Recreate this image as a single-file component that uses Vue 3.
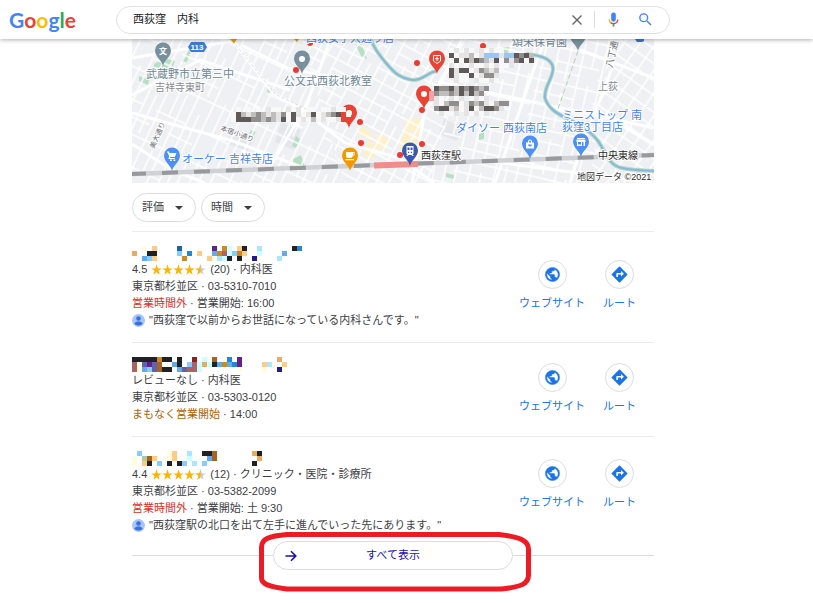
<template>
  <div class="page">
    <header class="top">
      <a class="logo" href="#" aria-label="Google">
        <span class="b">G</span><span class="r">o</span><span class="y">o</span><span class="b">g</span><span class="g">l</span><span class="r">e</span>
      </a>
      <form class="search" role="search" @submit.prevent>
        <input v-model="query" type="text" aria-label="検索">
        <button type="button" class="icon-btn clear" aria-label="クリア" @click="query = ''">
          <svg viewBox="0 0 16 16" width="16" height="16"><path d="M3.5 3.5l9 9M12.5 3.5l-9 9" stroke="#5f6368" stroke-width="1.4" fill="none" /></svg>
        </button>
        <span class="sep" />
        <button type="button" class="icon-btn mic" aria-label="音声検索">
          <svg viewBox="0 0 24 24" width="17" height="17">
            <path fill="#4285f4" d="M12 15a3.3 3.3 0 0 0 3.3-3.3V5.3a3.3 3.3 0 0 0-6.6 0v6.4A3.3 3.3 0 0 0 12 15z" />
            <path fill="#34a853" d="M10.8 18.5h2.4V22h-2.4z" />
            <path fill="#fbbc04" d="M7 16.9A6.8 6.8 0 0 1 5 12h2.1a4.8 4.8 0 0 0 1.4 3.4z" />
            <path fill="#ea4335" d="M12 17a5 5 0 0 1-3.5-1.6L7 16.9A7 7 0 0 0 12 19a7 7 0 0 0 7-7h-2.1A4.9 4.9 0 0 1 12 17z" />
          </svg>
        </button>
        <button type="submit" class="icon-btn go" aria-label="検索する">
          <svg viewBox="0 0 24 24" width="17" height="17"><path fill="#4285f4" d="M15.5 14h-.79l-.28-.27A6.47 6.47 0 0 0 16 9.5 6.5 6.5 0 1 0 9.5 16c1.61 0 3.09-.59 4.23-1.57l.27.28v.79l5 4.99L20.49 19zm-6 0a4.5 4.5 0 1 1 0-9 4.5 4.5 0 0 1 0 9z" /></svg>
        </button>
      </form>
    </header>

    <main class="results">
      <svg class="map" viewBox="132 39 522 144" role="img" aria-label="地図">
        <defs>
          <pattern id="west" width="47" height="62" patternUnits="userSpaceOnUse" patternTransform="rotate(25)">
            <path d="M3 0V62M14 0V34M22 0V62M33 0V62M41 20V62M0 4H47M0 34H33M22 50H47" class="street" />
          </pattern>
          <pattern id="mid" width="52" height="44" patternUnits="userSpaceOnUse" patternTransform="rotate(28)">
            <path d="M2 0V44M13 0V44M25 0V26M36 0V44M45 14V44M0 3H52M0 14H36M0 26H52M13 36H52" class="street" />
          </pattern>
          <pattern id="east" width="60" height="48" patternUnits="userSpaceOnUse" patternTransform="rotate(13)">
            <path d="M3 0V48M16 0V48M28 12V48M41 0V48M52 0V30M0 4H60M0 16H41M16 30H60M0 40H41" class="street" />
          </pattern>
          <pattern id="corner" width="40" height="26" patternUnits="userSpaceOnUse" patternTransform="rotate(35)">
            <path d="M2 0V26M16 0V26M29 0V26M0 3H40M0 15H40" class="street" />
          </pattern>
          <path id="pin" d="M0 15C-1 9-8 6-8-.5a8 8 0 0 1 16 0C8 6 1 9 0 15z" />
        </defs>

        <rect x="132" y="39" width="522" height="144" fill="#eff0f3" />
        <path fill="#e4e6ec" d="M234 128l22 8-9 15-21-8zM281 122l20 8-7 20-19-8zM444 119l19 8-6 14-18-7z" />
        <path fill="#b7dfc3" d="M154 64l10-6 11 3-3 8-18-2zM188 50l4-3-5 15-6-1zM139 76l10 4-1 5-9-4zM268 87l6 2-2 5-5-2zM293 159l8-4 4 12-11 3zM353 39l7 1 7 19-6-3zM296 136l4 3-4 9-4-2zM251 130l5 2-3 4-4-2zM500 48l10-1v6l-9 1zM479 134l5-2v7l-5 1zM446 173l8 2v4l-8-2z" />
        <path fill="#fdf0ca" d="M404 121l6-4 3 12-6 7zM411 119l10-1-2 15-9-2zM404 128l8 6-5 17-7-3zM359 126l13 6-2 8-12-5zM368 140l11 6-6 14-10-5zM377 134l13 5-4 12-10-4zM415 128l6 2-3 15-6-2z" />

        <path d="M132 39H300L345 183H132z" fill="url(#west)" />
        <path d="M300 39H470L430 183H345z" fill="url(#mid)" />
        <path d="M470 39H610L590 183H430z" fill="url(#east)" />
        <path d="M610 39H654V183H590z" fill="url(#corner)" />

        <g class="road">
          <path d="M132 58L232 41M243 46L290 69 332 77M132 113L236 142 304 168M132 144L172 170 205 183" />
          <path d="M233 41L273 93 300 108 345 143 400 158 434 183M462 39L447 69 425 110 412 183" />
          <path d="M330 39L316 80 304 110 268 170M545 39L530 80 495 183M615 60L600 100 583 140 570 183M440 82L654 128" />
          <path d="M132 95L200 60 290 90M480 160L654 183M580 50L654 78M555 110L600 112 654 145" />
        </g>
        <path d="M236 45L275 94 312 112" class="dashed" />
        <path d="M578 51L557 112" stroke="#a5d7b3" stroke-width="1" stroke-dasharray="5 3" />

        <path :d="river" stroke="#b4dcc0" stroke-width="4" />
        <path :d="river" stroke="#8ab6df" stroke-width="2" />

        <path d="M132 174L654 155" stroke="#cfd1d4" stroke-width="4.5" />
        <path d="M132 174L654 155" stroke="#97999c" stroke-width="4" stroke-dasharray="16 16" stroke-dashoffset="2" />
        <path d="M374 165.5L418 164" stroke="#f08d88" stroke-width="6" />

        <g fill="#ea3c33">
          <circle v-for="d in dots" :key="d.join()" :cx="d[0]" :cy="d[1]" r="3" />
        </g>

        <g v-for="p in pins" :key="p.kind + p.x" :transform="`translate(${p.x} ${p.y})`">
          <use href="#pin" :fill="p.color" />
          <circle v-if="p.kind === 'dot'" r="3" fill="#fff" />
          <text v-else-if="p.kind === 'school'" class="pin-char" y="3">文</text>
          <path v-else-if="p.kind === 'clinic'" d="M-3.5-3.5h7v5.5L0 4.5-3.5 2zM0-2.5v4.5M-2-.3h4" fill="none" stroke="#fff" stroke-width="1" />
          <path v-else-if="p.kind === 'cafe'" fill-rule="evenodd" d="M-4-4h8.500v3.500H3A3 3 0 0 1 .5 2h-2A2.500 2.500 0 0 1-4-.5zM3-3v1.500h.8V-3zM-4.500 3h8.500v1.200h-8.500z" fill="#fff" />
          <path v-else-if="p.kind === 'train'" fill-rule="evenodd" d="M-3.5-5h7V2.500L2.500 3.500 4 5H2.500L1.500 4h-3L-2.500 5H-4l1.500-1.500-1-1zM-2.500-3.500v2.500h2v-2.500zM.5-3.500v2.500h2v-2.500zM-2 .8V2h1.200V.8zM.8.8V2H2V.8z" fill="#fff" />
          <path v-else-if="p.kind === 'cart'" d="M-5-4.500h2l.6 1.500h6.800L2.800 1h-4.500l-.5 1h5v1h-6.500l1-2.500-1.800-4h-.5zM-2 3.500h1.800V5H-2zM1.500 3.500h1.800V5H1.500z" fill="#fff" />
          <path v-else-if="p.kind === 'bag'" fill-rule="evenodd" d="M-4-1.500h2v-1a2 2 0 0 1 4 0v1h2v6h-8zM-1-1.500h2v-1a1 1 0 0 0-2 0zM-2 .5a2 2 0 0 0 4 0z" fill="#fff" />
          <path v-else fill-rule="evenodd" d="M-4-4h8v1h-8zM-4.500-2.500h9V0H4v4H2.500V0H1v4h-5V0h-.5zM-3 0v2.500h3V0z" fill="#fff" />
        </g>
        <path d="M230 39h7l-3 4.500zM294 39h5l-2 3z" fill="#f29900" />
        <path d="M635 39h9v2l-2 1h-5z" fill="#3f6fd0" />
        <path d="M191 42h13l3 5-3 5h-13l-3-5z" fill="#3d7bd0" />
        <text x="197" y="50" class="route">113</text>

        <text
          v-for="l in labels"
          :key="l.text"
          :class="['label', l.tone]"
          :font-size="l.size"
          :transform="`translate(${l.x} ${l.y}) rotate(${l.turn || 0})`"
        >{{ l.text }}</text>

        <g v-for="m in mapMosaics" :key="m.x" shape-rendering="crispEdges">
          <rect v-for="c in cells(m.rows)" :key="c.id" :x="m.x + c.x" :y="m.y + c.y" width="5" height="5" :fill="c.fill" />
        </g>
      </svg>

      <div class="filters">
        <button v-for="f in filters" :key="f" type="button" class="chip" aria-haspopup="true">
          {{ f }}
          <svg viewBox="0 0 8 4" width="8" height="4"><path d="M0 0h8L4 4z" fill="#3c4043" /></svg>
        </button>
      </div>

      <article v-for="place in places" :key="place.phone" class="place">
        <div class="info">
          <svg class="name" viewBox="0 0 180 15" width="180" height="15" shape-rendering="crispEdges" aria-hidden="true">
            <rect v-for="c in cells(place.name)" :key="c.id" :x="c.x" :y="c.y" width="5" height="5" :fill="c.fill" />
          </svg>
          <p v-if="place.rating" class="line rating">
            <span>{{ place.rating }}</span>
            <svg class="stars" viewBox="0 0 55 11" width="55" height="11" aria-hidden="true">
              <path v-for="n in 5" :key="n" :d="star" :transform="`translate(${(n - 1) * 11} 0)`" :fill="n < 5 ? '#fbb400' : '#c7c9cc'" />
              <path d="M49.5.3V8.300L46.300 10.700 47.500 6.800 44.300 4.400H48.200z" fill="#fbb400" />
            </svg>
            <span>({{ place.count }}) · {{ place.type }}</span>
          </p>
          <p v-else class="line">レビューなし · {{ place.type }}</p>
          <p class="line">東京都杉並区 · {{ place.phone }}</p>
          <p class="line"><span :class="place.tone">{{ place.status }}</span> · {{ place.hours }}</p>
          <p v-if="place.quote" class="line quote">
            <svg viewBox="0 0 12 12" width="13" height="13" aria-hidden="true">
              <circle cx="6" cy="6" r="6" fill="#a6c5fa" />
              <circle cx="6" cy="4.2" r="2.1" fill="#3b6fdc" />
              <path d="M2.2 9.3C2.5 7.5 4.5 7 6 7s3.5.5 3.8 2.3A5 5 0 0 1 6 10.500a5 5 0 0 1-3.8-1.2z" fill="#3b6fdc" />
            </svg>
            <span>"{{ place.quote }}"</span>
          </p>
        </div>
        <nav class="actions">
          <a href="#" class="action">
            <span class="circle">
              <svg viewBox="0 0 24 24" width="17" height="17"><path fill="#1a73e8" stroke="#1a73e8" stroke-width=".7" d="M12 2a10 10 0 1 0 0 20 10 10 0 0 0 0-20zm-1 17.930A8 8 0 0 1 4.210 10.210L9 15v1a2 2 0 0 0 2 2zm6.900-2.540A2 2 0 0 0 16 16h-1v-3a1 1 0 0 0-1-1H8v-2h2a1 1 0 0 0 1-1V7h2a2 2 0 0 0 2-2v-.410a8 8 0 0 1 2.900 12.800z" /></svg>
            </span>
            ウェブサイト
          </a>
          <a href="#" class="action">
            <span class="circle">
              <svg viewBox="0 0 24 24" width="19" height="19"><path fill="#1a73e8" d="M21.710 11.290l-9-9a1 1 0 0 0-1.410 0l-9 9a1 1 0 0 0 0 1.410l9 9a1 1 0 0 0 1.410 0l9-9a1 1 0 0 0 0-1.410zM14 14.500V12h-4v3H8v-4a1 1 0 0 1 1-1h5V7.500l3.500 3.500z" /></svg>
            </span>
            ルート
          </a>
        </nav>
      </article>

      <div class="more">
        <button type="button" class="more-btn">
          <svg viewBox="0 0 12 12" width="12" height="12"><path d="M.5 6h10M6 1.200L10.800 6 6 10.800" fill="none" stroke="#1a0dab" stroke-width="1.600" /></svg>
          <span>すべて表示</span>
        </button>
        <svg class="marker" viewBox="0 0 272 62" width="272" height="62" aria-hidden="true">
          <path d="M28 4.500H240C262 7 269.500 11 269.500 19V45C269.500 54 262 57 242 59H28C10 57 2.500 54 2.500 48V17C2.500 9 10 6 28 4.500z" />
        </svg>
      </div>
    </main>
  </div>
</template>

<script setup>
import { ref } from 'vue'

const query = ref('西荻窪　内科')
const filters = ['評価', '時間']

const star = 'M5.5.3L6.8 4.4H10.7L7.5 6.8 8.7 10.7 5.5 8.3 2.3 10.7 3.5 6.8.3 4.4H4.2z'
const river = 'M370 38C374 48 379 55 386 63S398 78 413 80C424 80 426 73 436 71M526 54C540 55 552 58 553 68C553 80 544 85 545 98C548 108 556 113 566 118S590 130 598 141S608 165 622 168S645 170 654 171'

// one character per mosaic tile
const palette = {
  k: '#202124', c: '#fffde0', p: '#ffcc88', t: '#e8ab62', o: '#cc8822', w: '#a86322',
  d: '#1b62aa', b: '#62aaec', u: '#2288d0', s: '#88ccff', l: '#aae6ff', a: '#ccffff',
  v: '#6262aa', z: '#622288', m: '#aa6266', r: '#882222', n: '#201d88', e: '#a8ccaa',
  1: '#5f5a57', 2: '#918f8d', 3: '#c0bebd', 4: '#e6e5e5', 5: '#f8f8f8',
  R: '#ea4335', P: '#f3a6a1', B: '#a0c3f5',
}

const cells = (rows) => rows.flatMap((row, y) =>
  [...row].map((ch, x) => ({ id: `${x}-${y}`, x: x * 5, y: y * 5, fill: palette[ch] }))
).filter((c) => c.fill)

const places = [
  {
    name: ['..c.p....d......z.oa.pk..l......ku', 't..kk....s.u.p..bomasop..a....b', '..bsp.....o....pclak.k..n....l'],
    rating: '4.5', count: 20, type: '内科医', phone: '03-5310-7010',
    tone: 'closed', status: '営業時間外', hours: '営業開始: 16:00',
    quote: '西荻窪で以前からお世話になっている内科さんです。',
  },
  {
    name: ['kkkkkokk.k..r.a.w..u.z.......t.', 'mcvzvw..bk.smatakbobuz....pl..p', 'mcbsvwkk.bvmma.......c....c..n.'],
    type: '内科医', phone: '03-5303-0120',
    tone: 'soon', status: 'まもなく営業開始', hours: '14:00',
  },
  {
    name: ['.s.....cp..l..kkw.......tk', 'c.ewp..cp..a...bw........t', 'c.pk.s.k.ks.l.s.........k.'],
    rating: '4.4', count: 12, type: 'クリニック・医院・診療所', phone: '03-5382-2099',
    tone: 'closed', status: '営業時間外', hours: '営業開始: 土 9:30',
    quote: '西荻窪駅の北口を出て左手に進んでいった先にあります。',
  },
]

const dots = [[310, 43], [296, 70], [417, 63], [483, 46], [422, 110], [360, 122], [361, 143], [422, 144], [400, 155]]

const pins = [
  { x: 163, y: 51, kind: 'school', color: '#78909c' },
  { x: 302, y: 59, kind: 'dot', color: '#78909c' },
  { x: 578, y: 36, kind: 'dot', color: '#78909c' },
  { x: 437, y: 59, kind: 'clinic', color: '#ea4335' },
  { x: 424, y: 94, kind: 'dot', color: '#ea4335' },
  { x: 349, y: 113, kind: 'dot', color: '#ea4335' },
  { x: 350, y: 156, kind: 'cafe', color: '#f29900' },
  { x: 410, y: 151, kind: 'train', color: '#3c57b0' },
  { x: 172, y: 156, kind: 'cart', color: '#4d90f5' },
  { x: 530, y: 144, kind: 'bag', color: '#4d90f5' },
  { x: 581, y: 142, kind: 'store', color: '#4d90f5' },
]

const labels = [
  { text: '武蔵野市立第三中', x: 146, y: 78, size: 11, tone: 'slate' },
  { text: '吉祥寺東町', x: 155, y: 91, size: 10, tone: 'gray' },
  { text: '公文式西荻北教室', x: 284, y: 85, size: 11, tone: 'slate' },
  { text: '西荻女子大通り店', x: 306, y: 42, size: 11, tone: 'blue' },
  { text: '頌栄保育園', x: 512, y: 46, size: 11, tone: 'slate' },
  { text: '八丁通', x: 612, y: 68, size: 9, tone: 'dim', turn: -77 },
  { text: '上荻', x: 598, y: 90, size: 10, tone: 'gray' },
  { text: '美大通り', x: 154, y: 149, size: 7, tone: 'dim', turn: -66 },
  { text: '本宿小通り', x: 220, y: 130, size: 7, tone: 'dim', turn: 20 },
  { text: 'オーケー 吉祥寺店', x: 182, y: 163, size: 11, tone: 'blue' },
  { text: 'ダイソー 西荻南店', x: 456, y: 132, size: 11, tone: 'blue' },
  { text: 'ミニストップ 南', x: 562, y: 119, size: 11, tone: 'blue' },
  { text: '荻窪3丁目店', x: 562, y: 131, size: 11, tone: 'blue' },
  { text: '西荻窪駅', x: 421, y: 159, size: 10, tone: 'dark' },
  { text: '中央東線', x: 598, y: 159, size: 10, tone: 'dark' },
  { text: '地図データ ©2021', x: 577, y: 180, size: 9, tone: 'dark' },
]

const mapMosaics = [
  { x: 231, y: 107, rows: ['.5.5.5.455.454.55.55455', '513432343425145415432 R5'.replace(' ', '1'), '5111223234151545354554R'] },
  { x: 444, y: 48, rows: ['.54545.45455', '.1544354BBB4BB1213', '.51513123415242151', '.45.5455454554', '.14115423435', '.1455154224', '..455.45545'] },
  { x: 429, y: 86, rows: ['.12213121232', 'P2332313132', 'P45.454.5454', '.453225423245322', '.21143541531124', '..4554.45454'] },
]
</script>

<style>
body {
  background: #fff;
}
</style>

<style scoped>
.page {
  font-family: 'Liberation Sans', 'Noto Sans CJK JP', sans-serif;
  font-size: 11px;
  line-height: 17px;
  color: #3c4043;
}

button,
input {
  margin: 0;
  padding: 0;
  border: 0;
  background: none;
  font: inherit;
  color: inherit;
}

button {
  cursor: pointer;
}

a {
  text-decoration: none;
}

svg {
  display: block;
  flex: none;
}

.top {
  position: relative;
  display: flex;
  align-items: center;
  height: 39px;
  padding-left: 9px;
  background: #fff;
  box-shadow: 0 1px 4px rgba(32, 33, 36, 0.35);
}

.logo {
  display: flex;
  flex: none;
  width: 107px;
  font-family: Lato, 'Liberation Sans', sans-serif;
  font-size: 21px;
  line-height: 28px;
  font-weight: 700;
}

.logo .b { color: #4285f4; }
.logo .r { color: #ea4335; }
.logo .y { color: #fbbc05; }
.logo .g { color: #34a853; }

.search {
  display: flex;
  align-items: center;
  flex: 1;
  box-sizing: border-box;
  max-width: 554px;
  height: 28px;
  padding: 0 15px 0 16px;
  border: 1px solid #dfe1e5;
  border-radius: 14px;
}

.search input {
  flex: 1;
  min-width: 0;
  color: #202124;
  outline: none;
}

.icon-btn {
  display: grid;
  place-items: center;
  flex: none;
}

.sep {
  width: 1px;
  height: 17px;
  margin: 0 10px 0 9px;
  background: #dadce0;
}

.go {
  margin-left: 15px;
}

.results {
  max-width: 522px;
  margin-left: 132px;
}

.map {
  width: 100%;
  height: auto;
}

.street {
  fill: none;
  stroke: #fff;
  stroke-width: 1.5;
}

.road {
  fill: none;
  stroke: #fff;
  stroke-width: 3;
}

.dashed {
  fill: none;
  stroke: #dcdde0;
  stroke-width: 1;
  stroke-dasharray: 3 2;
}

.map > path[stroke] {
  fill: none;
}

.pin-char,
.route {
  fill: #fff;
  font-size: 8px;
  font-weight: 700;
  text-anchor: middle;
}

.label {
  paint-order: stroke;
  stroke: #fff;
  stroke-width: 2px;
  stroke-linejoin: round;
}

.slate { fill: #6c8593; }
.gray { fill: #868a8f; }
.dim { fill: #6b6e72; }
.blue { fill: #3f83ee; }
.dark { fill: #2a2a2a; }

.filters {
  display: flex;
  gap: 5px;
  padding: 10px 0 9px;
}

.chip {
  display: flex;
  align-items: center;
  gap: 11px;
  height: 29px;
  padding: 0 12px 0 9px;
  border: 1px solid #dadce0;
  border-radius: 15px;
  box-sizing: border-box;
}

.place {
  display: flex;
  align-items: center;
  justify-content: space-between;
  border-top: 1px solid #ebebeb;
}

.info {
  padding: 14px 0 13px;
}

.place:last-of-type .info {
  padding-bottom: 0;
}

.line {
  margin: 0;
}

.rating,
.quote {
  display: flex;
  align-items: center;
  gap: 4px;
}

.closed { color: #d93025; }
.soon { color: #b06000; }

.actions {
  display: flex;
  gap: 18px;
  padding: 0 18px 2px 0;
}

.action {
  display: flex;
  flex-direction: column;
  align-items: center;
  gap: 6px;
  color: #1a73e8;
}

.circle {
  display: grid;
  place-items: center;
  width: 27px;
  height: 27px;
  border: 1px solid #dadce0;
  border-radius: 50%;
}

.more {
  position: relative;
  display: flex;
  align-items: center;
  padding: 7px 0 32px;
}

.more::before,
.more::after {
  content: '';
  flex: 1;
  height: 1px;
  background: #dadce0;
}

.more-btn {
  display: flex;
  align-items: center;
  box-sizing: border-box;
  width: 240px;
  height: 29px;
  padding: 0 11px;
  border: 1px solid #dadce0;
  border-radius: 15px;
  color: #1a0dab;
}

.more-btn span {
  flex: 1;
  padding-right: 12px;
  text-align: center;
}

.marker {
  position: absolute;
  top: -4px;
  left: 50%;
  margin-left: -134px;
  fill: none;
  stroke: #ed1c24;
  stroke-width: 5;
  pointer-events: none;
}
</style>
